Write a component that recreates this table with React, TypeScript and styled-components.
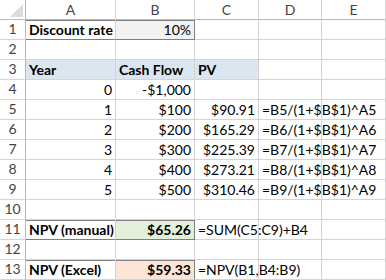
import React from "react";
import styled, { createGlobalStyle, css } from "styled-components";

const Global = createGlobalStyle`
  html, body { margin: 0; padding: 0; background: #fff; }
  body { font-family: Lato, "Open Sans", sans-serif; }
`;

const Sheet = styled.div`
  display: grid;
  grid-template-columns: 26px 90px 79px 64px 63px 64px;
  grid-auto-rows: 20px;
  width: 386px;
  height: 280px;
  overflow: hidden;
  font-size: 14px;
  color: #000;
`;

type Align = "left" | "right" | "center";

const Cell = styled.div<{
  $align?: Align;
  $bold?: boolean;
  $bg?: string;
  $boxTop?: boolean;
  $boxRight?: boolean;
  $boxBottom?: boolean;
}>`
  box-sizing: border-box;
  min-width: 0;
  border-right: 1px solid #d4d4d4;
  border-bottom: 1px solid #d4d4d4;
  background: ${(p) => p.$bg || "transparent"};
  display: flex;
  align-items: flex-end;
  justify-content: ${(p) =>
    p.$align === "right" ? "flex-end" : p.$align === "center" ? "center" : "flex-start"};
  padding: 0 3px 1px 3px;
  font-weight: ${(p) => (p.$bold ? 700 : 400)};
  white-space: nowrap;
  overflow: visible;
  line-height: 17px;
  ${(p) =>
    p.$boxTop &&
    css`
      box-shadow: inset 0 1px 0 #808080;
    `}
  ${(p) =>
    p.$boxRight &&
    css`
      border-right-color: #808080;
    `}
  ${(p) =>
    p.$boxBottom &&
    css`
      border-bottom-color: #808080;
    `}
`;

const Head = styled.div`
  box-sizing: border-box;
  border-right: 1px solid #d4d4d4;
  border-bottom: 1px solid #b8b8b8;
  background: #fff;
  color: #444;
  display: flex;
  align-items: center;
  justify-content: center;
  font-size: 14px;
  line-height: 18px;
`;

const RowHead = styled(Head)`
  border-bottom: 1px solid #d4d4d4;
  border-right: 1px solid #b8b8b8;
  align-items: flex-end;
  padding-bottom: 1px;
`;

const Corner = styled.div`
  box-sizing: border-box;
  border-right: 1px solid #b8b8b8;
  border-bottom: 1px solid #b8b8b8;
  display: flex;
  align-items: flex-end;
  justify-content: flex-end;
  padding: 0 2px 2px 0;
`;

type CellDef = {
  t?: string;
  a?: Align;
  b?: boolean;
  bg?: string;
  box?: ("t" | "r" | "b")[];
};

const blue = "#dce6f1";
const green = "#e2efda";
const orange = "#fce4d6";
const gray = "#f2f2f2";

const rows: CellDef[][] = [
  [
    { t: "Discount rate", b: true, box: ["t", "b"] },
    { t: "10%", a: "right", bg: gray, box: ["t", "r", "b"] },
    {},
    {},
    {},
  ],
  [{}, {}, {}, {}, {}],
  [
    { t: "Year", b: true, bg: blue },
    { t: "Cash Flow", b: true, bg: blue },
    { t: "PV", b: true, bg: blue },
    {},
    {},
  ],
  [{ t: "0", a: "right" }, { t: "-$1,000", a: "right" }, {}, {}, {}],
  [{ t: "1", a: "right" }, { t: "$100", a: "right" }, { t: "$90.91", a: "right" }, { t: "=B5/(1+$B$1)^A5" }, {}],
  [{ t: "2", a: "right" }, { t: "$200", a: "right" }, { t: "$165.29", a: "right" }, { t: "=B6/(1+$B$1)^A6" }, {}],
  [{ t: "3", a: "right" }, { t: "$300", a: "right" }, { t: "$225.39", a: "right" }, { t: "=B7/(1+$B$1)^A7" }, {}],
  [{ t: "4", a: "right" }, { t: "$400", a: "right" }, { t: "$273.21", a: "right" }, { t: "=B8/(1+$B$1)^A8" }, {}],
  [{ t: "5", a: "right" }, { t: "$500", a: "right" }, { t: "$310.46", a: "right" }, { t: "=B9/(1+$B$1)^A9" }, {}],
  [{}, {}, {}, {}, {}],
  [
    { t: "NPV (manual)", b: true, box: ["t", "b"] },
    { t: "$65.26", a: "right", b: true, bg: green, box: ["t", "r", "b"] },
    { t: "=SUM(C5:C9)+B4" },
    {},
    {},
  ],
  [{}, {}, {}, {}, {}],
  [
    { t: "NPV (Excel)", b: true, box: ["t"] },
    { t: "$59.33", a: "right", b: true, bg: orange, box: ["t", "r"] },
    { t: "=NPV(B1,B4:B9)" },
    {},
    {},
  ],
];

const cols = ["A", "B", "C", "D", "E"];

export default function App() {
  return (
    <>
      <Global />
      <Sheet>
        <Corner>
          <svg width="13" height="13" viewBox="0 0 13 13">
            <polygon points="13,0 13,13 0,13" fill="#dcdcdc" />
          </svg>
        </Corner>
        {cols.map((c) => (
          <Head key={c}>{c}</Head>
        ))}
        {rows.map((r, i) => (
          <React.Fragment key={i}>
            <RowHead>{i + 1}</RowHead>
            {r.map((c, j) => (
              <Cell
                key={j}
                $align={c.a}
                $bold={c.b}
                $bg={c.bg}
                $boxTop={c.box?.includes("t")}
                $boxRight={c.box?.includes("r")}
                $boxBottom={c.box?.includes("b")}
              >
                {c.t}
              </Cell>
            ))}
          </React.Fragment>
        ))}
      </Sheet>
    </>
  );
}
